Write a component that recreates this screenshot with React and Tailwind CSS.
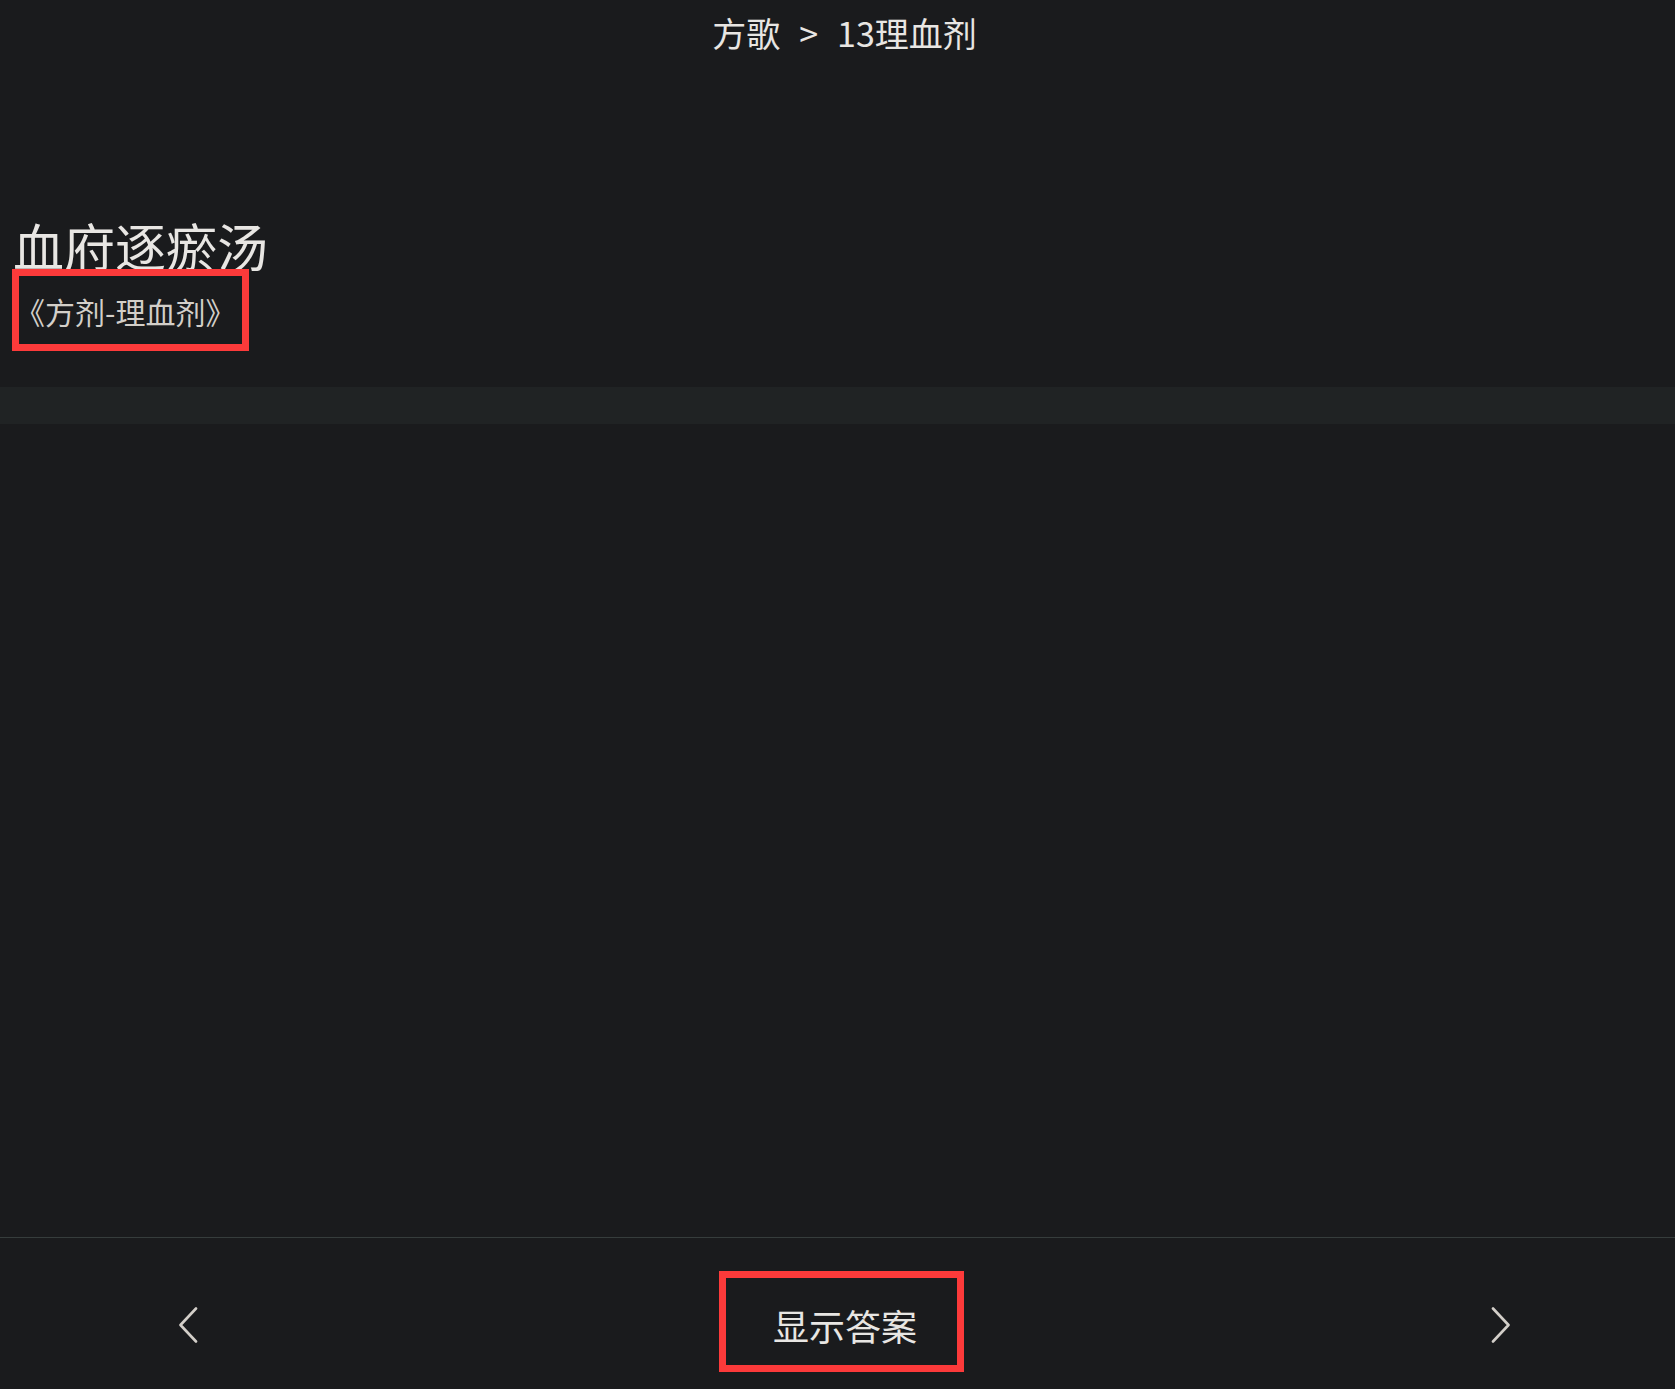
import React from 'react';

const FONT = { fontFamily: '"Noto Sans CJK SC", "Noto Sans", sans-serif' };

const Chevron = ({ dir }) => (
    <svg width="20" height="36" viewBox="0 0 20 36" fill="none">
        <polyline
            points={dir === 'left' ? '18,1.5 2.5,18 18,34.5' : '2,1.5 17.5,18 2,34.5'}
            stroke="#d3cfc9"
            strokeWidth="2.6"
            strokeLinecap="round"
            strokeLinejoin="round"
        />
    </svg>
);

const App = () => {
    return (
        <div className="h-[1389px] w-full bg-[#1a1b1d] flex flex-col overflow-hidden" style={FONT}>
            {/* breadcrumb */}
            <div className="pt-[16px] pl-[14px] flex justify-center">
                <div className="flex items-center text-[34px] leading-none text-[#e8e6e3] whitespace-nowrap">
                    <span>方歌</span>
                    <span className="mx-[19px]">&gt;</span>
                    <span>13理血剂</span>
                </div>
            </div>

            {/* card header */}
            <div className="mt-[170px] pl-[13px]">
                <h1 className="text-[51px] leading-none text-[#e8e6e3] font-normal">血府逐瘀汤</h1>
            </div>
            <div className="ml-[12px] mt-[-2px] w-[237px] h-[82px] border-[7px] border-[#fc3a3a] pt-[20px]">
                <span className="block -ml-[4px] text-[30px] leading-none text-[#d3cfc9] whitespace-nowrap">《方剂-理血剂》</span>
            </div>

            <div className="mt-[36px] h-[37px] bg-[#202324]" />

            <div className="flex-1" />

            {/* bottom bar */}
            <div className="h-[152px] border-t border-[#363d3c] flex items-start">
                <div className="ml-[178px] mt-[69px] cursor-pointer">
                    <Chevron dir="left" />
                </div>
                <div className="ml-[521px] mt-[33px] w-[245px] h-[101px] border-[7px] border-[#fc3a3a] pt-[29px] pl-[47px] cursor-pointer">
                    <span className="block text-[36px] leading-none text-[#e8e6e3] whitespace-nowrap">显示答案</span>
                </div>
                <div className="ml-[527px] mt-[69px] cursor-pointer">
                    <Chevron dir="right" />
                </div>
            </div>
        </div>
    );
};

export default App;
